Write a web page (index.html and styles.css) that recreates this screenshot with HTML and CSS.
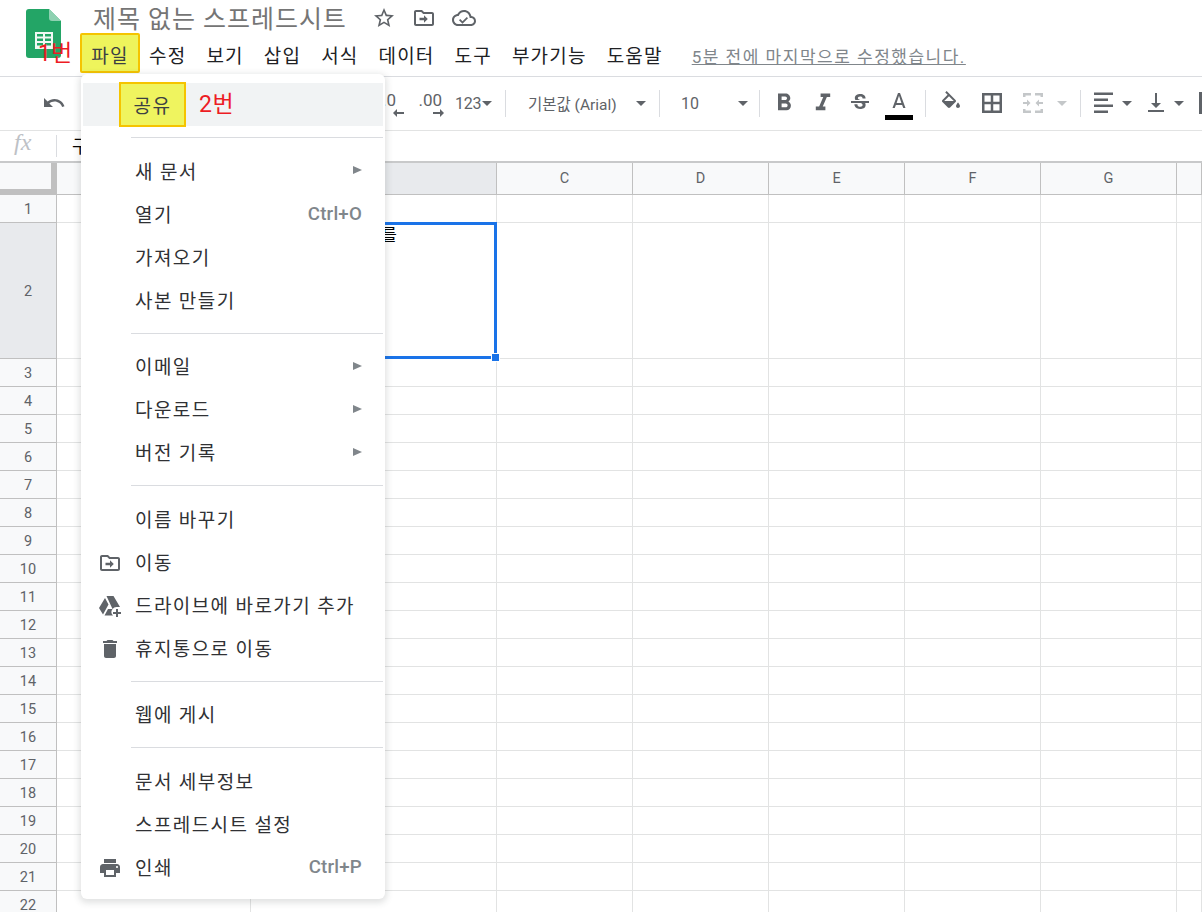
FILE: index.html
```html
<!DOCTYPE html>
<html lang="ko">
<head>
<meta charset="utf-8">
<title>제목 없는 스프레드시트</title>
<link rel="stylesheet" href="styles.css">
</head>
<body>
<header class="app-header">
  <svg class="logo" viewBox="0 0 35 49"><path fill="#23a566" d="M3 0H23L35 12V46a3 3 0 0 1-3 3H3a3 3 0 0 1-3-3V3a3 3 0 0 1 3-3z"/><path fill="#8ed1b1" d="M23 0L35 12H26a3 3 0 0 1-3-3z"/><rect x="9" y="23" width="18" height="17" fill="#f1f8f4"/><path fill="#23a566" d="M11 25h6v2.500h-6zM19 25h6v2.500h-6zM11 29.500h6v2.500h-6zM19 29.500h6v2.500h-6zM11 34h6v2.500h-6zM19 34h6v2.500h-6z"/></svg>
  <div class="head-main">
    <div class="title-row">
      <span class="doc-title">제목 없는 스프레드시트</span>
      <svg class="ic star" viewBox="0 0 24 24"><path d="M22 9.240l-7.190-.620L12 2 9.190 8.630 2 9.240l5.460 4.730L5.820 21 12 17.270 18.180 21l-1.630-7.030L22 9.240zM12 15.400l-3.760 2.270 1-4.280-3.320-2.880 4.380-.380L12 6.100l1.710 4.040 4.380.380-3.320 2.880 1 4.280L12 15.400z"/></svg>
      <svg class="ic mv" viewBox="0 0 24 24"><path d="M20 6h-8l-2-2H4c-1.100 0-2 .9-2 2v12c0 1.100.9 2 2 2h16c1.100 0 2-.9 2-2V8c0-1.100-.9-2-2-2zm0 12H4V6h5.170l2 2H20v10zm-8-3.800H7.500v-2.400H12V9.200l3.800 3.800-3.800 3.800v-2.600z"/></svg>
      <svg class="ic mv" viewBox="0 0 24 24"><path d="M19.350 10.040C18.670 6.590 15.640 4 12 4 9.110 4 6.600 5.640 5.350 8.040 2.340 8.360 0 10.910 0 14c0 3.310 2.690 6 6 6h13c2.760 0 5-2.240 5-5 0-2.640-2.050-4.780-4.650-4.960zM19 18H6c-2.210 0-4-1.790-4-4 0-2.050 1.530-3.760 3.560-3.970l1.070-.110.5-.950C8.080 7.140 9.940 6 12 6c2.620 0 4.880 1.860 5.390 4.430l.3 1.500 1.530.110c1.560.1 2.780 1.410 2.780 2.960 0 1.650-1.350 3-3 3zm-8.500-2.700l-2.300-2.300-1.200 1.200 3.500 3.500 5.500-5.500-1.200-1.200z"/></svg>
    </div>
    <nav class="menu-row">
      <span class="mark mark-file">파일</span>
      <span>수정</span><span>보기</span><span>삽입</span><span>서식</span><span>데이터</span><span>도구</span><span>부가기능</span><span>도움말</span>
      <span class="last-edit">5분 전에 마지막으로 수정했습니다.</span>
    </nav>
  </div>
</header>

<div class="toolbar">
  <svg class="ic ml42" viewBox="0 0 24 24"><path d="M12.500 8c-2.650 0-5.050.99-6.900 2.600L2 7v9h9l-3.620-3.620c1.390-1.160 3.160-1.880 5.120-1.880 3.540 0 6.550 2.310 7.600 5.500l2.370-.78C21.080 11.030 17.150 8 12.500 8z"/></svg>
  <span class="tb-space"></span>
  <span class="dec"><span class="dec-a">.0</span><svg class="arrow" viewBox="0 0 11 8"><path d="M4 0v3h7v2H4v3L0 4z"/></svg></span>
  <span class="dec dec2"><span class="dec-b">.00</span><svg class="arrow" viewBox="0 0 11 8"><path d="M7 0v3H0v2h7v3l4-4z"/></svg></span>
  <span class="tb-text t123">123</span><i class="caret ml1"></i>
  <i class="sep ml13"></i>
  <span class="tb-text font-name">기본값 (Arial)</span><i class="caret ml19"></i>
  <i class="sep ml13"></i>
  <span class="tb-text size">10</span><i class="caret ml39"></i>
  <i class="sep ml11"></i>
  <svg class="ic ml12" viewBox="2 2 20 20"><path d="M15.600 10.790c.97-.67 1.650-1.770 1.650-2.790 0-2.260-1.750-4-4-4H7v14h7.040c2.090 0 3.710-1.700 3.710-3.790 0-1.520-.86-2.820-2.150-3.420zM10 6.500h3c.83 0 1.500.67 1.500 1.500s-.67 1.500-1.500 1.500h-3v-3zm3.500 9H10v-3h3.500c.83 0 1.500.67 1.500 1.500s-.67 1.500-1.500 1.500z"/></svg>
  <svg class="ic ml15" viewBox="2 2 20 20"><path d="M10 4v3h2.210l-3.420 8H6v3h8v-3h-2.210l3.420-8H18V4z"/></svg>
  <svg class="ic ml13" viewBox="0 0 24 24"><path d="M6.850 7.080C6.850 4.370 9.450 3 12.240 3c1.640 0 3 .49 3.900 1.280.77.65 1.460 1.730 1.460 3.240h-3.010c0-.31-.05-.59-.15-.85-.29-.86-1.200-1.280-2.250-1.280-1.860 0-2.340 1.020-2.340 1.700 0 .48.25.88.74 1.210.38.25.77.48 1.410.7H7.390c-.21-.34-.54-.89-.54-1.920zM21 12v-2H3v2h9.620c1.150.45 1.960.75 1.960 1.970 0 1-.81 1.670-2.280 1.670-1.540 0-2.930-.54-2.930-2.510H6.400c0 .55.08 1.130.24 1.580.81 2.290 3.290 3.300 5.670 3.300 2.270 0 5.300-.89 5.300-4.050 0-.3-.01-1.160-.48-1.960H21z"/></svg>
  <span class="color-a ml13"><svg class="ic" viewBox="0 0 24 24"><path d="M11 2L5.500 17h2.250l1.120-3h6.250l1.120 3h2.250L13 2h-2zm-1.380 10L12 4.670 14.380 12H9.620z"/></svg><i class="color-bar"></i></span>
  <i class="sep ml12"></i>
  <svg class="ic ml13" viewBox="0 0 24 24"><path d="M16.560 8.940L7.620 0 6.210 1.410l2.380 2.380-5.150 5.150c-.59.59-.59 1.540 0 2.120l5.500 5.500c.29.29.68.44 1.060.44s.77-.15 1.060-.44l5.500-5.500c.59-.58.59-1.530 0-2.120zM5.210 10L10 5.210 14.790 10H5.210zM19 11.500s-2 2.170-2 3.500c0 1.100.9 2 2 2s2-.9 2-2c0-1.330-2-3.500-2-3.500z"/><path d="M5 10h10l-5.500 5.500z"/></svg>
  <svg class="ic ml17" viewBox="0 0 24 24"><path d="M2 2h20v20H2zM4.500 4.500v6.250h6.250V4.500zM13.250 4.500v6.250h6.250V4.500zM4.500 13.250v6.250h6.250v-6.250zM13.250 13.250v6.250h6.250v-6.250z" fill-rule="evenodd"/></svg>
  <svg class="ic ic-off ml17" viewBox="0 0 24 24"><path d="M2 2h8v2.500H4.500V6H2zM14 2h8v4h-2.500V4.500H14zM2 18h2.500v1.500H10V22H2zM19.500 18H22v4h-8v-2.500h5.500zM2 11h4V8.500L9.500 12 6 15.500V13H2zM22 11h-4V8.500L14.500 12 18 15.500V13h4z"/></svg>
  <i class="caret caret-off ml12"></i>
  <i class="sep ml13"></i>
  <svg class="ic ml10" viewBox="0 0 24 24"><path d="M3 3h19v2.500H3zM3 9h14v2.500H3zM3 15h19v2.500H3zM3 21h14v2.500H3z" transform="translate(0 -1.500)"/></svg>
  <i class="caret ml7"></i>
  <svg class="ic ml12" viewBox="0 0 24 24"><path d="M17 12h-4V2h-2v10H7l5 5zM4 19v2h16v-2z"/></svg>
  <i class="caret ml6"></i>
  <i class="next-icon"></i>
</div>

<div class="formula">
  <span class="fx">fx</span>
  <i class="fx-sep"></i>
  <span class="formula-text">구글 시트 공유를</span>
</div>

<div class="sheet">
  <div class="corner"></div>
  <div class="col"></div><div class="col col-on"></div><div class="col">C</div><div class="col">D</div><div class="col">E</div><div class="col">F</div><div class="col">G</div><div class="col"></div>

  <div class="rowh">1</div><div class="c"></div><div class="c"></div><div class="c"></div><div class="c"></div><div class="c"></div><div class="c"></div><div class="c"></div><div class="c"></div>
  <div class="rowh rowh-on">2</div><div class="c"></div><div class="c cell-active">구글 시트 공유를<span class="sel"><i class="handle"></i></span></div><div class="c"></div><div class="c"></div><div class="c"></div><div class="c"></div><div class="c"></div><div class="c"></div>
  <div class="rowh">3</div><div class="c"></div><div class="c"></div><div class="c"></div><div class="c"></div><div class="c"></div><div class="c"></div><div class="c"></div><div class="c"></div>
  <div class="rowh">4</div><div class="c"></div><div class="c"></div><div class="c"></div><div class="c"></div><div class="c"></div><div class="c"></div><div class="c"></div><div class="c"></div>
  <div class="rowh">5</div><div class="c"></div><div class="c"></div><div class="c"></div><div class="c"></div><div class="c"></div><div class="c"></div><div class="c"></div><div class="c"></div>
  <div class="rowh">6</div><div class="c"></div><div class="c"></div><div class="c"></div><div class="c"></div><div class="c"></div><div class="c"></div><div class="c"></div><div class="c"></div>
  <div class="rowh">7</div><div class="c"></div><div class="c"></div><div class="c"></div><div class="c"></div><div class="c"></div><div class="c"></div><div class="c"></div><div class="c"></div>
  <div class="rowh">8</div><div class="c"></div><div class="c"></div><div class="c"></div><div class="c"></div><div class="c"></div><div class="c"></div><div class="c"></div><div class="c"></div>
  <div class="rowh">9</div><div class="c"></div><div class="c"></div><div class="c"></div><div class="c"></div><div class="c"></div><div class="c"></div><div class="c"></div><div class="c"></div>
  <div class="rowh">10</div><div class="c"></div><div class="c"></div><div class="c"></div><div class="c"></div><div class="c"></div><div class="c"></div><div class="c"></div><div class="c"></div>
  <div class="rowh">11</div><div class="c"></div><div class="c"></div><div class="c"></div><div class="c"></div><div class="c"></div><div class="c"></div><div class="c"></div><div class="c"></div>
  <div class="rowh">12</div><div class="c"></div><div class="c"></div><div class="c"></div><div class="c"></div><div class="c"></div><div class="c"></div><div class="c"></div><div class="c"></div>
  <div class="rowh">13</div><div class="c"></div><div class="c"></div><div class="c"></div><div class="c"></div><div class="c"></div><div class="c"></div><div class="c"></div><div class="c"></div>
  <div class="rowh">14</div><div class="c"></div><div class="c"></div><div class="c"></div><div class="c"></div><div class="c"></div><div class="c"></div><div class="c"></div><div class="c"></div>
  <div class="rowh">15</div><div class="c"></div><div class="c"></div><div class="c"></div><div class="c"></div><div class="c"></div><div class="c"></div><div class="c"></div><div class="c"></div>
  <div class="rowh">16</div><div class="c"></div><div class="c"></div><div class="c"></div><div class="c"></div><div class="c"></div><div class="c"></div><div class="c"></div><div class="c"></div>
  <div class="rowh">17</div><div class="c"></div><div class="c"></div><div class="c"></div><div class="c"></div><div class="c"></div><div class="c"></div><div class="c"></div><div class="c"></div>
  <div class="rowh">18</div><div class="c"></div><div class="c"></div><div class="c"></div><div class="c"></div><div class="c"></div><div class="c"></div><div class="c"></div><div class="c"></div>
  <div class="rowh">19</div><div class="c"></div><div class="c"></div><div class="c"></div><div class="c"></div><div class="c"></div><div class="c"></div><div class="c"></div><div class="c"></div>
  <div class="rowh">20</div><div class="c"></div><div class="c"></div><div class="c"></div><div class="c"></div><div class="c"></div><div class="c"></div><div class="c"></div><div class="c"></div>
  <div class="rowh">21</div><div class="c"></div><div class="c"></div><div class="c"></div><div class="c"></div><div class="c"></div><div class="c"></div><div class="c"></div><div class="c"></div>
  <div class="rowh">22</div><div class="c"></div><div class="c"></div><div class="c"></div><div class="c"></div><div class="c"></div><div class="c"></div><div class="c"></div><div class="c"></div>
</div>

<div class="note note-one">1번</div>

<div class="file-menu">
  <div class="item item-hover"><span class="mark mark-share">공유</span><span class="note note-two">2번</span></div>
  <hr class="rule">
  <div class="item"><span class="label">새 문서</span><i class="sub"></i></div>
  <div class="item"><span class="label">열기</span><span class="key">Ctrl+O</span></div>
  <div class="item"><span class="label">가져오기</span></div>
  <div class="item"><span class="label">사본 만들기</span></div>
  <hr class="rule">
  <div class="item"><span class="label">이메일</span><i class="sub"></i></div>
  <div class="item"><span class="label">다운로드</span><i class="sub"></i></div>
  <div class="item"><span class="label">버전 기록</span><i class="sub"></i></div>
  <hr class="rule">
  <div class="item"><span class="label">이름 바꾸기</span></div>
  <div class="item">
    <svg class="ic item-ic" viewBox="0 0 24 24"><path d="M20 6h-8l-2-2H4c-1.100 0-2 .9-2 2v12c0 1.100.9 2 2 2h16c1.100 0 2-.9 2-2V8c0-1.100-.9-2-2-2zm0 12H4V6h5.170l2 2H20v10zm-8-3.800H7.500v-2.400H12V9.200l3.800 3.800-3.800 3.800v-2.600z"/></svg>
    <span class="label">이동</span></div>
  <div class="item">
    <svg class="ic item-ic" viewBox="0 0 24 24"><path d="M8.500 2h7L22 13h-3.500a5 5 0 0 0-4 2zM7 4l3.500 6.500L5 20.500 1 14zM6.500 21.500L10 15h4.500a5 5 0 0 0 .5 6.500zM18 15h2v3h3v2h-3v3h-2v-3h-3v-2h3z"/></svg>
    <span class="label">드라이브에 바로가기 추가</span></div>
  <div class="item">
    <svg class="ic item-ic" viewBox="0 0 24 24"><path d="M6 19c0 1.100.9 2 2 2h8c1.100 0 2-.9 2-2V7H6v12zM19 4h-3.500l-1-1h-5l-1 1H5v2h14V4z"/></svg>
    <span class="label">휴지통으로 이동</span></div>
  <hr class="rule">
  <div class="item"><span class="label">웹에 게시</span></div>
  <hr class="rule">
  <div class="item"><span class="label">문서 세부정보</span></div>
  <div class="item"><span class="label">스프레드시트 설정</span></div>
  <div class="item">
    <svg class="ic item-ic" viewBox="0 0 24 24"><path d="M19 8H5c-1.660 0-3 1.340-3 3v6h4v4h12v-4h4v-6c0-1.660-1.340-3-3-3zm-3 11H8v-5h8v5zm3-7c-.55 0-1-.45-1-1s.45-1 1-1 1 .45 1 1-.45 1-1 1zm-1-9H6v4h12V3z"/></svg>
    <span class="label">인쇄</span><span class="key">Ctrl+P</span></div>
</div>
</body>
</html>
```
FILE: styles.css
```css
* { box-sizing: border-box; }
html, body { margin: 0; height: 912px; overflow: hidden; background: #fff; }
body { position: relative; font-family: Roboto, "Noto Sans CJK KR", sans-serif; color: #202124; }
i { display: block; }
.ic { width: 24px; height: 24px; fill: #5f6368; flex: none; display: block; }

/* header */
.app-header { height: 77px; display: flex; border-bottom: 1px solid #dadce0; }
.logo { width: 35px; height: 49px; margin: 9px 0 0 26px; flex: none; }
.head-main { margin-left: 32px; display: flex; flex-direction: column; }
.title-row { height: 33px; padding-top: 3px; display: flex; align-items: center; }
.doc-title { font-size: 25px; letter-spacing: .95px; color: #757575; line-height: 30px; width: 279px; white-space: nowrap; position: relative; top: 2px; }
.mv { margin-left: 16px; }
.menu-row { display: flex; align-items: center; gap: 20px; height: 40px; font-size: 19px; letter-spacing: 1.200px; white-space: nowrap; color: #202124; }
.menu-row > span { padding-top: 2px; }
.mark { border: 2px solid #f5c400; background: #eef45c; display: flex; align-items: center; justify-content: center; color: #3c4043; }
.mark-file { width: 60px; height: 40px; margin: 0 -11px 0 -13px; border-radius: 2px; }
.menu-row > .last-edit { margin-left: 9px; font-size: 17px; letter-spacing: 1.500px; color: #80868b; text-decoration: underline; padding-top: 5px; }

/* toolbar */
.toolbar { height: 54px; display: flex; align-items: center; border-bottom: 1px solid #e2e3e3; padding-bottom: 1px; overflow: hidden; }
.tb-space { width: 306px; flex: none; }
.tb-text { font-size: 16px; color: #5f6368; white-space: nowrap; flex: none; }
.dec { width: 32px; display: flex; flex-direction: column; align-items: flex-end; font-size: 17px; color: #5f6368; flex: none; line-height: 20px; }
.dec-a { margin-right: 8px; }
.dec2 { width: 34px; margin-left: 6px; }
.dec-b { margin-right: 2px; }
.arrow { width: 11px; height: 8px; fill: #5f6368; margin-top: -1px; }
.t123 { margin-left: 11px; width: 26px; letter-spacing: -.2px; }
.caret { width: 0; height: 0; flex: none; border-left: 5.500px solid transparent; border-right: 5.500px solid transparent; border-top: 5.500px solid #5f6368; }
.caret-off { border-top-color: #c4c7c9; }
.sep { width: 1px; height: 27px; background: #dadce0; flex: none; }
.font-name { margin-left: 22px; width: 89px; font-size: 15.500px; }
.size { margin-left: 21px; width: 18px; }
.color-a { display: flex; flex-direction: column; align-items: center; width: 28px; padding-top: 4px; flex: none; }
.color-a .ic { height: 24px; }
.color-bar { width: 28px; height: 5px; background: #000; }
.ic-off { fill: #c4c7c9; }
.next-icon { width: 4px; height: 22px; background: #5f6368; margin-left: 15px; flex: none; }
.ml1 { margin-left: 1px; } .ml6 { margin-left: 6px; } .ml7 { margin-left: 7px; } .ml10 { margin-left: 10px; }
.ml11 { margin-left: 11px; } .ml12 { margin-left: 12px; } .ml13 { margin-left: 13px; } .ml15 { margin-left: 15px; }
.ml17 { margin-left: 17px; } .ml19 { margin-left: 19px; } .ml39 { margin-left: 39px; } .ml42 { margin-left: 42px; }

/* formula bar */
.formula { height: 32px; display: flex; align-items: center; border-bottom: 2px solid #c8c9ca; }
.fx { width: 56px; padding: 0 0 7px 14px; font: italic 24px "Liberation Serif", serif; color: #bdc1c6; flex: none; }
.fx-sep { width: 1px; height: 22px; background: #dadce0; flex: none; }
.formula-text { margin-left: 15px; font-size: 18px; color: #000; white-space: nowrap; padding-bottom: 2px; }

/* sheet */
.sheet { display: grid; grid-template-columns: 57px 194px 246px repeat(5, 136px) 25px; grid-template-rows: 32px 28px 136px; grid-auto-rows: 28px; font-size: 14.500px; }
.corner { background: #f8f9fa; border-right: 6px solid #c0c0c0; border-bottom: 6px solid #c0c0c0; box-shadow: 1px 0 0 #c0c0c0; }
.col { background: #f8f9fa; border-right: 1px solid #c0c0c0; border-bottom: 1px solid #c0c0c0; display: flex; align-items: center; justify-content: center; color: #5f6368; }
.col-on { background: #e8eaed; }
.rowh { background: #f8f9fa; border-right: 1px solid #c0c0c0; border-bottom: 1px solid #c0c0c0; display: flex; align-items: center; justify-content: center; color: #5f6368; padding-top: 2px; }
.rowh-on { background: #e8eaed; }
.c { border-right: 1px solid #e2e3e3; border-bottom: 1px solid #e2e3e3; }
.cell-active { position: relative; font-size: 17px; color: #000; text-align: right; padding: 2px 99px 0 0; white-space: nowrap; line-height: 20px; }
.sel { position: absolute; left: -1px; top: -1px; right: -1px; bottom: -1px; border: 3px solid #1a73e8; }
.handle { position: absolute; right: -6px; bottom: -6px; width: 9px; height: 9px; background: #1a73e8; border: 1px solid #fff; }

/* annotations */
.note { color: #ed1c24; font-size: 23px; line-height: 28px; white-space: nowrap; }
.note-one { position: absolute; left: 38px; top: 40px; }
.note-two { margin-left: 13px; letter-spacing: .5px; }

/* file menu */
.file-menu { position: absolute; left: 81px; top: 74px; width: 304px; padding: 9px 2px 10px; background: #fff; border-radius: 6px; box-shadow: 0 2px 6px 2px rgba(60, 64, 67, .15); font-size: 19px; letter-spacing: 1.400px; }
.item { position: relative; height: 43px; display: flex; align-items: center; padding: 0 21px 2px 52px; white-space: nowrap; color: #303134; }
.item-hover { background: #f1f3f4; padding: 0 0 0 36px; }
.mark-share { width: 67px; height: 45px; margin-top: -1px; flex: none; border-width: 2px; background: #eff45f; }
.rule { height: 1px; border: 0; background: #dadce0; margin: 11px 0 11.600px 48px; }
.label { flex: 1; }
.key { font-size: 18.700px; font-weight: 500; letter-spacing: .2px; color: #80868b; padding-top: 2px; }
.sub { width: 0; height: 0; border-top: 4.500px solid transparent; border-bottom: 4.500px solid transparent; border-left: 9px solid #80868b; }
.item-ic { position: absolute; left: 15px; top: 10px; }
```
